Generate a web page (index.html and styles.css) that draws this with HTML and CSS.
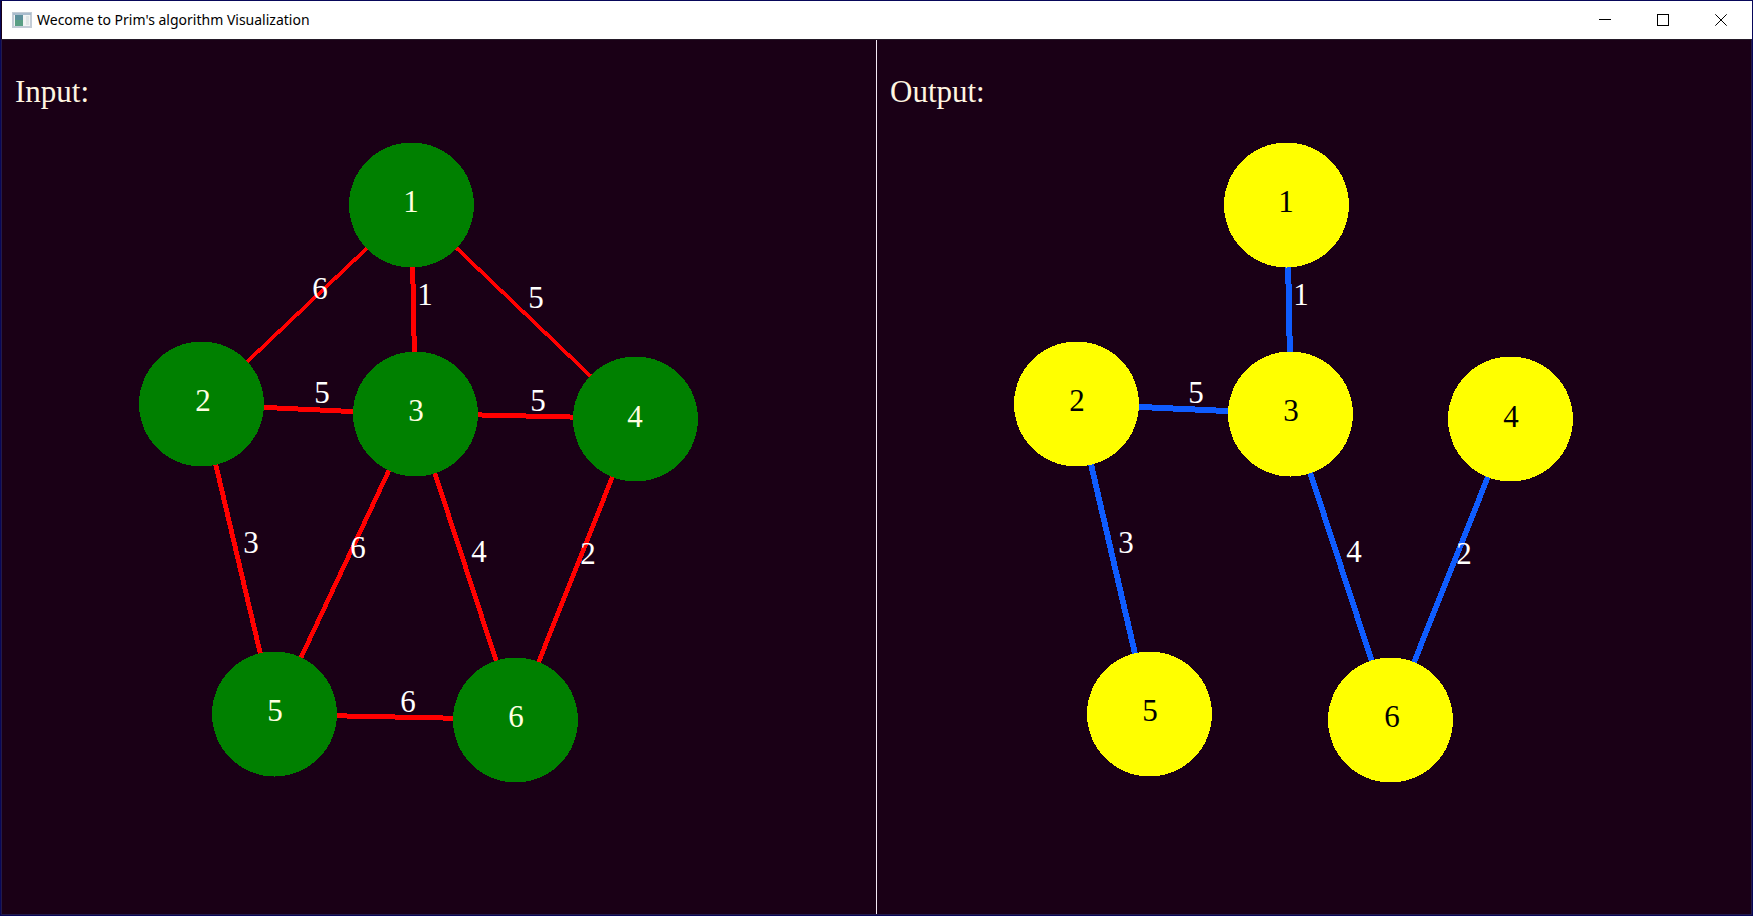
FILE: index.html
```
<!DOCTYPE html>
<html lang="en">
<head>
<meta charset="utf-8">
<title>Wecome to Prim's algorithm Visualization</title>
<link rel="stylesheet" href="styles.css">
</head>
<body>
<div class="window">
  <header class="titlebar">
    <svg class="app-icon" width="20" height="16" viewBox="0 0 20 16" aria-hidden="true">
      <rect x="0" y="0" width="20" height="16" fill="#c3ccd6"/>
      <rect x="1" y="1" width="18" height="2" fill="#a9bccd"/>
      <rect x="2" y="3" width="16" height="11" fill="#f1f3f3"/>
      <rect x="3" y="3" width="8" height="11" fill="#5c8f9b"/>
      <rect x="3" y="8" width="8" height="6" fill="#5a9f84"/>
      <rect x="14" y="4" width="3" height="9" fill="#dfe5e6"/>
    </svg>
    <h1 class="title">Wecome to Prim's algorithm Visualization</h1>
    <div class="controls">
      <button class="control" type="button" aria-label="Minimize"><svg width="12" height="12" viewBox="0 0 12 12"><path d="M0 5.5H12"/></svg></button>
      <button class="control" type="button" aria-label="Maximize"><svg width="12" height="12" viewBox="0 0 12 12"><path d="M.5 .5H11.5V11.5H.5Z"/></svg></button>
      <button class="control" type="button" aria-label="Close"><svg width="12" height="12" viewBox="0 0 12 12"><path class="smooth" d="M.3 .3L11.7 11.7M11.7 .3L.3 11.7"/></svg></button>
    </div>
  </header>
  <main class="panes">
    <section class="pane">
      <h2 class="heading">Input:</h2>
      <svg class="graph input" viewBox="2 130 874 784" role="img" aria-label="Input graph">
        <g class="edges">
          <polygon points="202,402 202,407 412,208 412,203"/>
          <polygon points="409,205 414,205 418,414 413,414"/>
          <polygon points="412,203 412,208 636,422 636,417"/>
          <polygon points="202,402 202,407 416,417 416,412"/>
          <polygon points="416,411 416,416 636,421 636,416"/>
          <polygon points="199,404 204,404 277,714 272,714"/>
          <polygon points="413,414 418,414 277,714 272,714"/>
          <polygon points="413,414 418,414 518,720 513,720"/>
          <polygon points="633,419 638,419 518,720 513,720"/>
          <polygon points="274,712 274,717 516,722 516,717"/>
        </g>
        <g class="nodes">
          <circle cx="411.5" cy="205" r="62.5"/>
          <circle cx="201.5" cy="404" r="62.5"/>
          <circle cx="415.5" cy="414" r="62.5"/>
          <circle cx="635.5" cy="419" r="62.5"/>
          <circle cx="274.5" cy="714" r="62.5"/>
          <circle cx="515.5" cy="720" r="62.5"/>
        </g>
        <g class="names">
          <text x="411" y="212">1</text>
          <text x="203" y="411">2</text>
          <text x="416" y="421">3</text>
          <text x="635" y="427">4</text>
          <text x="275" y="721">5</text>
          <text x="516" y="727">6</text>
        </g>
        <g class="weights">
          <text x="320" y="299">6</text>
          <text x="425" y="305">1</text>
          <text x="536" y="308">5</text>
          <text x="322" y="403">5</text>
          <text x="538" y="411">5</text>
          <text x="251" y="553">3</text>
          <text x="358" y="558">6</text>
          <text x="479" y="562">4</text>
          <text x="588" y="564">2</text>
          <text x="408" y="712">6</text>
        </g>
      </svg>
    </section>
    <div class="divider"></div>
    <section class="pane">
      <h2 class="heading">Output:</h2>
      <svg class="graph output" viewBox="2 130 874 784" role="img" aria-label="Minimum spanning tree">
        <g class="edges">
          <polygon points="409,205 415,205 419,414 413,414"/>
          <polygon points="202,401 202,407 416,417 416,411"/>
          <polygon points="199,404 205,404 277,714 271,714"/>
          <polygon points="413,414 419,414 519,720 513,720"/>
          <polygon points="633,419 639,419 519,720 513,720"/>
        </g>
        <g class="nodes">
          <circle cx="411.5" cy="205" r="62.5"/>
          <circle cx="201.5" cy="404" r="62.5"/>
          <circle cx="415.5" cy="414" r="62.5"/>
          <circle cx="635.5" cy="419" r="62.5"/>
          <circle cx="274.5" cy="714" r="62.5"/>
          <circle cx="515.5" cy="720" r="62.5"/>
        </g>
        <g class="names">
          <text x="411" y="212">1</text>
          <text x="202" y="411">2</text>
          <text x="416" y="421">3</text>
          <text x="636" y="427">4</text>
          <text x="275" y="721">5</text>
          <text x="517" y="727">6</text>
        </g>
        <g class="weights">
          <text x="426" y="305">1</text>
          <text x="321" y="403">5</text>
          <text x="251" y="553">3</text>
          <text x="479" y="562">4</text>
          <text x="589" y="564">2</text>
        </g>
      </svg>
    </section>
  </main>
</div>
</body>
</html>
```
FILE: styles.css
```
* {
  box-sizing: border-box;
}

body {
  margin: 0;
  background: #1a0016;
}

.window {
  display: flex;
  flex-direction: column;
  min-height: 100vh;
  border: 1px solid #08085a;
}

.titlebar {
  display: flex;
  align-items: center;
  height: 38px;
  margin-left: 1px;
  padding: 0 2px 0 10px;
  background: #fff;
}

.app-icon {
  flex: none;
}

.title {
  flex: 1;
  margin: 0 0 0 5px;
  font: 400 14px/20px "Noto Sans", "Open Sans", sans-serif;
  color: #000;
}

.controls {
  display: flex;
  height: 100%;
}

.control {
  display: grid;
  place-items: center;
  width: 58px;
  height: 100%;
  padding: 0;
  border: 0;
  background: none;
}

.control path {
  fill: none;
  stroke: #000;
  shape-rendering: crispEdges;
}

.control .smooth {
  shape-rendering: auto;
}

.panes {
  display: grid;
  grid-template-columns: 1fr 1px 1fr;
  flex: 1;
  border: 1px solid #231a4a;
  border-top-color: #241a28;
}

.pane {
  min-width: 0;
  background: #1a0016;
}

.divider {
  background: #f4e8f4;
}

.heading {
  margin: 0;
  padding: 34px 13px 20px;
  font: 400 31px/36px "Liberation Serif", serif;
  color: #fff5e1;
}

.graph {
  display: block;
  width: 100%;
  font: 31px "Liberation Serif", serif;
  text-anchor: middle;
}

.edges,
.nodes {
  shape-rendering: crispEdges;
}

.weights {
  fill: #fff;
}

.input .edges {
  fill: #f00;
}

.input .nodes {
  fill: #008000;
}

.input .names {
  fill: #ffffe0;
}

.output .edges {
  fill: #0f5cff;
}

.output .nodes {
  fill: #ff0;
}

.output .names {
  fill: #000;
}
```
